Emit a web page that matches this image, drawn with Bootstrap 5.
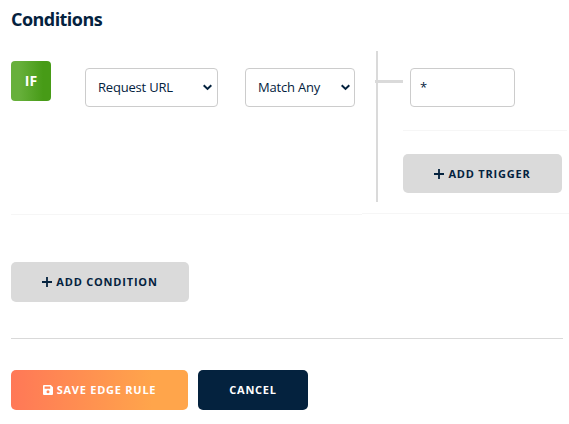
<!DOCTYPE html>
<html lang="en">
<head>
<meta charset="utf-8">
<meta name="viewport" content="width=device-width, initial-scale=1">
<title>Edge rule conditions</title>
<link href="https://cdn.jsdelivr.net/npm/bootstrap@5.3.0/dist/css/bootstrap.min.css" rel="stylesheet">
<style>
body { font-family: "Open Sans", sans-serif; font-size: 13px; color: #04223e; background: #fff; overflow: hidden; }
.page { padding: 7px 0 0 11px; }
.page-title { font-size: 18px; font-weight: 700; letter-spacing: -.55px; line-height: 24px; margin-bottom: 20px; }
.rule-row { width: 558px; }
.rule-left { width: 351px; height: 164px; border-bottom: 1px solid #f6f6f6; }
.rule-right { width: 207px; height: 163px; border-bottom: 1px solid #f6f6f6; }
.if-tag { width: 40px; height: 40px; margin-top: 10px; padding-bottom: 2px; font-size: 14px; font-weight: 700; border-radius: 4px; color: #fff; background: linear-gradient(90deg, #67b03b 20%, #479b17 80%); }
.field { height: 39px; margin-top: 17px; border: 1px solid #ccc; border-radius: 4px; padding: 0 4px 0 12px; letter-spacing: -.2px; }
.field-source { width: 133px; margin-left: 34px; padding-right: 5px; }
.field-match { width: 110px; margin-left: 27px; }
.field-value { width: 105px; margin: 17px 0 0 7px; padding-left: 9px; }
.stem { width: 2px; height: 151px; margin-left: 14px; background: #dadada; }
.branch { width: 28px; height: 3px; margin: 29px 0 0 -3px; background: #dadada; }
.triggers { width: 164px; }
.trigger-item { height: 80px; border-bottom: 1px solid #f6f6f6; }
.act { height: 40px; padding: 0; border: 0; border-radius: 5px; font-size: 11px; font-weight: 700; letter-spacing: .75px; color: #04223e; gap: 4px; }
.act-grey, .act-grey:hover { background: #dadada; color: #04223e; letter-spacing: .8px; }
.act-trigger { width: 159px; height: 39px; margin-top: 23px; padding-top: 1px; }
.act-condition { width: 178px; margin-top: 47px; }
.act-save, .act-save:hover { width: 177px; color: #fff; background: linear-gradient(90deg, #ff7857 0%, #ffa54b 80%); }
.act-cancel, .act-cancel:hover { width: 110px; color: #fff; background: #04223e; }
.act-row { gap: 10px; }
.divider { width: 552px; height: 1px; margin: 36px 0 31px; background: #d9d9d9; }
</style>
</head>
<body>
<main class="page">
  <h1 class="page-title">Conditions</h1>
  <section class="rule-row d-flex align-items-start">
    <div class="rule-left d-flex align-items-start">
      <div class="if-tag d-flex align-items-center justify-content-center">IF</div>
      <div class="field field-source d-flex align-items-center justify-content-between" role="combobox" tabindex="0">
        <span>Request URL</span>
        <svg width="9" height="7" viewBox="0 0 9 7" fill="none" stroke="#04223e" stroke-width="2"><path d="M.7 1.2 4.5 4.9 8.3 1.2"/></svg>
      </div>
      <div class="field field-match d-flex align-items-center justify-content-between" role="combobox" tabindex="0">
        <span>Match Any</span>
        <svg width="9" height="7" viewBox="0 0 9 7" fill="none" stroke="#04223e" stroke-width="2"><path d="M.7 1.2 4.5 4.9 8.3 1.2"/></svg>
      </div>
    </div>
    <div class="rule-right d-flex align-items-start">
      <div class="stem"></div>
      <div class="branch"></div>
      <div class="triggers">
        <div class="trigger-item d-flex align-items-start">
          <div class="field field-value d-flex align-items-center" role="textbox" tabindex="0">*</div>
        </div>
        <button type="button" class="btn act act-grey act-trigger d-flex align-items-center justify-content-center">
          <svg width="10" height="10" viewBox="0 0 10 10" fill="#04223e"><path d="M4.1 0h1.8v4.1H10v1.8H5.9V10H4.1V5.9H0V4.1h4.1z"/></svg>
          <span>ADD TRIGGER</span>
        </button>
      </div>
    </div>
  </section>
  <button type="button" class="btn act act-grey act-condition d-flex align-items-center justify-content-center">
    <svg width="10" height="10" viewBox="0 0 10 10" fill="#04223e"><path d="M4.1 0h1.8v4.1H10v1.8H5.9V10H4.1V5.9H0V4.1h4.1z"/></svg>
    <span>ADD CONDITION</span>
  </button>
  <div class="divider"></div>
  <div class="d-flex act-row">
    <button type="button" class="btn act act-save d-flex align-items-center justify-content-center">
      <svg width="10" height="10" viewBox="0 0 10 10" fill="#fff" fill-rule="evenodd"><path d="M1 0h6.8L10 2.2V9q0 1-1 1H1Q0 10 0 9V1Q0 0 1 0zM1.6 1.5v2.2h5.6V1.5zM5 5.2a1.5 1.5 0 1 0 0 3 1.5 1.5 0 0 0 0-3z"/></svg>
      <span>SAVE EDGE RULE</span>
    </button>
    <button type="button" class="btn act act-cancel">CANCEL</button>
  </div>
</main>
<script src="https://cdn.jsdelivr.net/npm/bootstrap@5.3.0/dist/js/bootstrap.bundle.min.js"></script>
</body>
</html>
